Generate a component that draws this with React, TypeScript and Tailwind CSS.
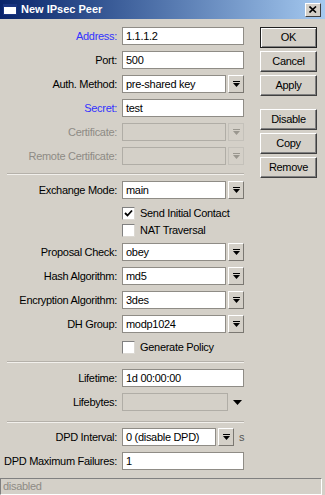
import React from "react";

const font = { fontFamily: '"Liberation Sans", Arial, sans-serif' };

const Arrow = ({ disabled }: { disabled?: boolean }) => (
	<svg width="7" height="7" viewBox="0 0 7 7">
		<rect x="0" y="0" width="7" height="1" fill={disabled ? "#9a978f" : "#000"} />
		<polygon points="0,2 7,2 3.5,6" fill={disabled ? "#9a978f" : "#000"} />
	</svg>
);

const Label = ({ text, tone = "normal" }: { text: string; tone?: "normal" | "blue" | "gray" }) => (
	<div
		className={
			"w-[117px] text-right leading-none " +
			(tone === "blue" ? "text-[#3232ff]" : tone === "gray" ? "text-[#8e8b85]" : "text-black")
		}
	>
		{text}
	</div>
);

const Field = ({ value = "", w = "w-[122px]", disabled }: { value?: string; w?: string; disabled?: boolean }) => (
	<div
		className={
			"h-[18px] border flex items-center pl-[3px] leading-none " +
			w +
			(disabled ? " bg-[#d4d0c8] border-[#b0ada6]" : " bg-white border-[#8f8c86]")
		}
	>
		{value}
	</div>
);

const ComboBtn = ({ disabled }: { disabled?: boolean }) => (
	<div
		className={
			"w-[16px] h-[18px] ml-[2px] flex items-center justify-center bg-[#d4d0c8] border " +
			(disabled ? "border-[#c4c1ba]" : "border-t-white border-l-white border-r-[#7b7872] border-b-[#7b7872]")
		}
	>
		<Arrow disabled={disabled} />
	</div>
);

const Row = ({ mt, children }: { mt: string; children: React.ReactNode }) => (
	<div className={"flex items-center h-[18px] " + mt}>{children}</div>
);

const TextRow = ({ mt, label, value, tone, disabled }: { mt: string; label: string; value?: string; tone?: "normal" | "blue" | "gray"; disabled?: boolean }) => (
	<Row mt={mt}>
		<Label text={label} tone={tone} />
		<div className="ml-[5px]">
			<Field value={value} disabled={disabled} />
		</div>
	</Row>
);

const ComboRow = ({ mt, label, value, tone, disabled }: { mt: string; label: string; value?: string; tone?: "normal" | "blue" | "gray"; disabled?: boolean }) => (
	<Row mt={mt}>
		<Label text={label} tone={tone} />
		<div className="ml-[5px] flex">
			<Field value={value} w="w-[104px]" disabled={disabled} />
			<ComboBtn disabled={disabled} />
		</div>
	</Row>
);

const Check = ({ mt, label, checked }: { mt: string; label: string; checked?: boolean }) => (
	<div className={"flex items-center h-[17px] pl-[122px] " + mt}>
		<div className="w-[13px] h-[13px] bg-white border border-t-[#808080] border-l-[#808080] border-r-[#dcd9d3] border-b-[#dcd9d3] flex items-center justify-center">
			{checked && (
				<svg width="9" height="9" viewBox="0 0 9 9">
					<path d="M1 4 L3.5 6.5 L8 1.5" stroke="#000" strokeWidth="1.8" fill="none" />
				</svg>
			)}
		</div>
		<span className="ml-[5px] leading-none">{label}</span>
	</div>
);

const Sep = ({ mt }: { mt: string }) => (
	<div className={"ml-[7px] w-[237px] border-t border-t-[#b5b1aa] border-b border-b-[#f2f0ec] " + mt} />
);

const Btn = ({ text, mt, primary }: { text: string; mt: string; primary?: boolean }) => (
	<div
		className={
			"w-[57px] h-[21px] flex items-center justify-center bg-[#d4d0c8] border " +
			mt +
			(primary
				? " border-[#202020] shadow-[inset_1px_1px_0_#fff,inset_-1px_-1px_0_#808080]"
				: " border-t-white border-l-white border-r-[#404040] border-b-[#404040] shadow-[inset_-1px_-1px_0_#808080]")
		}
	>
		{text}
	</div>
);

export default function App() {
	return (
		<div
			className="w-[325px] h-[495px] bg-[#d4d0c8] flex flex-col text-[11px] tracking-[-0.3px] text-black overflow-hidden"
			style={font}
		>
			{/* title bar */}
			<div className="h-[19px] flex items-center bg-gradient-to-r from-[#0a246a] to-[#a6caf0] pl-[3px] pr-[4px]">
				<div className="w-[14px] h-[11px] bg-white border border-[#1a3480] border-t-[3px]" />
				<span className="ml-[4px] text-white font-bold tracking-normal leading-none">New IPsec Peer</span>
				<div className="ml-auto w-[16px] h-[14px] bg-[#d4d0c8] border border-t-white border-l-white border-r-[#404040] border-b-[#404040] flex items-center justify-center">
					<svg width="8" height="7" viewBox="0 0 8 7">
						<path d="M0.5 0.5 L7 6.5 M7 0.5 L0.5 6.5" stroke="#000" strokeWidth="1.6" />
					</svg>
				</div>
			</div>

			<div className="flex-1 flex">
				<div className="w-[260px] flex flex-col">
					<TextRow mt="mt-[8px]" label="Address:" value="1.1.1.2" tone="blue" />
					<TextRow mt="mt-[6px]" label="Port:" value="500" />
					<ComboRow mt="mt-[6px]" label="Auth. Method:" value="pre-shared key" />
					<TextRow mt="mt-[6px]" label="Secret:" value="test" tone="blue" />
					<ComboRow mt="mt-[6px]" label="Certificate:" tone="gray" disabled />
					<ComboRow mt="mt-[6px]" label="Remote Certificate:" tone="gray" disabled />
					<Sep mt="mt-[8px]" />
					<ComboRow mt="mt-[6px]" label="Exchange Mode:" value="main" />
					<Check mt="mt-[6px]" label="Send Initial Contact" checked />
					<Check mt="mt-0" label="NAT Traversal" />
					<ComboRow mt="mt-[4px]" label="Proposal Check:" value="obey" />
					<ComboRow mt="mt-[6px]" label="Hash Algorithm:" value="md5" />
					<ComboRow mt="mt-[6px]" label="Encryption Algorithm:" value="3des" />
					<ComboRow mt="mt-[6px]" label="DH Group:" value="modp1024" />
					<Check mt="mt-[6px]" label="Generate Policy" />
					<Sep mt="mt-[5px]" />
					<TextRow mt="mt-[6px]" label="Lifetime:" value="1d 00:00:00" />
					<Row mt="mt-[6px]">
						<Label text="Lifebytes:" />
						<div className="ml-[5px] flex items-center">
							<Field w="w-[106px]" disabled />
							<svg className="ml-[5px]" width="9" height="5" viewBox="0 0 9 5">
								<polygon points="0,0 9,0 4.5,5" fill="#000" />
							</svg>
						</div>
					</Row>
					<Sep mt="mt-[10px]" />
					<Row mt="mt-[5px]">
						<Label text="DPD Interval:" />
						<div className="ml-[5px] flex items-center">
							<Field value="0 (disable DPD)" w="w-[94px]" />
							<ComboBtn />
							<span className="ml-[5px] text-[#555] leading-none">s</span>
						</div>
					</Row>
					<TextRow mt="mt-[6px]" label="DPD Maximum Failures:" value="1" />
				</div>

				<div className="flex flex-col">
					<Btn text="OK" mt="mt-[8px]" primary />
					<Btn text="Cancel" mt="mt-[3px]" />
					<Btn text="Apply" mt="mt-[3px]" />
					<Btn text="Disable" mt="mt-[13px]" />
					<Btn text="Copy" mt="mt-[3px]" />
					<Btn text="Remove" mt="mt-[3px]" />
				</div>
			</div>

			{/* status bar */}
			<div className="h-[17px] w-[322px] flex items-center pl-[2px] border border-t-[#808080] border-l-[#808080] border-r-white border-b-white text-[#8e8b85] leading-none">
				disabled
			</div>
		</div>
	);
}
